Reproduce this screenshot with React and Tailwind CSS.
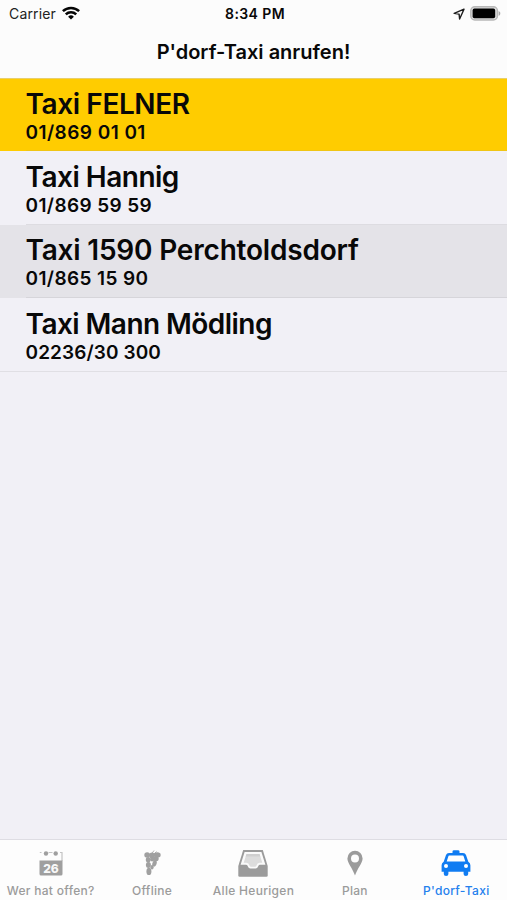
const taxis = [
  { name: 'Taxi FELNER', phone: '01/869 01 01', row: 'h-[72px] bg-[#ffcc00] pt-[9px]', line: 'border-[#f0c514]', nameCls: 'tracking-[-0.4px]', phoneCls: 'tracking-[0.45px]' },
  { name: 'Taxi Hannig', phone: '01/869 59 59', row: 'h-[74px] bg-[#f1f0f6] pt-[10px]', line: 'border-[#dddce1]', nameCls: 'tracking-[-0.5px]', phoneCls: 'tracking-[0.38px]' },
  { name: 'Taxi 1590 Perchtoldsdorf', phone: '01/865 15 90', row: 'h-[73px] bg-[#e4e3e8] pt-[9px]', line: 'border-[#d6d5da]', nameCls: 'tracking-[-0.2px]', phoneCls: 'tracking-[0.38px]' },
  { name: 'Taxi Mann Mödling', phone: '02236/30 300', row: 'h-[73px] bg-[#f1f0f6] pt-[10px]', line: 'border-transparent', nameCls: 'tracking-[-0.55px]', phoneCls: 'tracking-[0.1px]' },
]

function WifiIcon() {
  return (
    <svg className="w-[18px] h-[14px] -mt-[2px]" viewBox="0 0 18 14" fill="none" stroke="#050505" strokeWidth="2.5">
      <path d="M0.9 5.2a11.6 11.6 0 0 1 16.2 0" />
      <path d="M3.8 8.3a7.4 7.4 0 0 1 10.4 0" />
      <path d="M9 13.6 6.1 10.7a4.1 4.1 0 0 1 5.8 0z" fill="#050505" stroke="none" />
    </svg>
  )
}

function LocationIcon() {
  return (
    <svg className="w-3 h-3 -mt-px" viewBox="0 0 12 12" fill="none" stroke="#1c1c1c" strokeWidth="1.4" strokeLinejoin="round">
      <path d="M11 1.2 1.2 5.4l4.9.7.5 4.900z" />
    </svg>
  )
}

function BatteryIcon() {
  return (
    <svg className="w-[31px] h-[15px] -mt-[2px]" viewBox="0 0 31 15">
      <rect x="0.8" y="0.8" width="26.600" height="13.2" rx="4" fill="#dedede" stroke="#b8b8b8" strokeWidth="1.5" />
      <rect x="2.6" y="2.6" width="22.6" height="9.6" rx="1.8" fill="#000" />
      <path d="M28.6 5v4.8c1-.4 1.7-1.3 1.7-2.4S29.6 5.400 28.600 5z" fill="#a8a8a8" />
    </svg>
  )
}

function CalendarIcon() {
  return (
    <svg className="w-6 h-[27px]" viewBox="0 0 24 27">
      <path d="M.8 2.500H2.500M9.500 2.500h4M21 2.500h2V11" fill="none" stroke="#c4c4c4" strokeWidth="1.2" />
      <path d="M.5 10.500h23V24a1.500 1.500 0 0 1-1.500 1.500H2A1.500 1.500 0 0 1 .5 24z" fill="#9f9f9f" />
      <circle cx="7" cy="3.500" r="2.200" fill="#9f9f9f" />
      <circle cx="16.700" cy="3.500" r="2.200" fill="#9f9f9f" />
      <text x="12" y="22.500" textAnchor="middle" fill="#f8f8f8" className="font-['Inter'] text-[12px] font-extrabold">26</text>
    </svg>
  )
}

function GrapesIcon() {
  return (
    <svg className="w-[18px] h-[27px]" viewBox="0 0 18 27" fill="#a0a0a0">
      <path d="M8.500 4 11 .5M11 4l2.500-2.500" stroke="#b5b5b5" strokeWidth="1" />
      <ellipse cx="4.200" cy="5" rx="2.900" ry="2.800" />
      <ellipse cx="9" cy="5.500" rx="2.700" ry="3.100" />
      <ellipse cx="14.200" cy="5" rx="3.500" ry="2.800" />
      <ellipse cx="5.200" cy="9.800" rx="2.400" ry="2.800" />
      <ellipse cx="9.200" cy="9.200" rx="2.100" ry="2.200" />
      <ellipse cx="13" cy="8.800" rx="2.700" ry="2.500" />
      <ellipse cx="5.400" cy="15" rx="2.500" ry="2.900" />
      <ellipse cx="11.500" cy="13.500" rx="2.100" ry="3.200" transform="rotate(20 11.500 13.500)" />
      <ellipse cx="9" cy="17.300" rx="1.600" ry="2.300" />
      <ellipse cx="5.900" cy="21.400" rx="2.500" ry="3.600" />
    </svg>
  )
}

function InboxIcon() {
  return (
    <svg className="w-[30px] h-[27px]" viewBox="0 0 30 27">
      <path d="M5.200 0h19.600L29.700 16v9.500a1.300 1.300 0 0 1-1.300 1.300H1.600A1.300 1.300 0 0 1 .3 25.500V16z" fill="#9b9b9b" />
      <path d="M6.600 2h16.800L27.400 14.800h-5.200q-1.500 0-2 1.400-.8 2.300-2.600 2.300h-5.200q-1.800 0-2.600-2.300-.5-1.400-2-1.400H2.600z" fill="#fafafa" />
      <path d="M8.500 4h13l2.800 8.800h-2.800q-2.300.3-3 2.700-.5 1.300-1.500 1.300h-4q-1 0-1.500-1.300-.7-2.400-3-2.700H5.700z" fill="#dcdcdc" />
      <path d="M8.500 4h13l.9 2.600H7.600z" fill="#cfcfcf" />
    </svg>
  )
}

function PinIcon() {
  return (
    <svg className="w-4 h-[27px]" viewBox="0 0 16 27">
      <path fillRule="evenodd" d="M8 .8a7.600 7.600 0 0 1 7.600 7.600C15.600 13 10.500 18 8 25.500 5.500 18 .4 13 .4 8.400A7.600 7.600 0 0 1 8 .8zm0 3.600a4 4 0 1 0 0 8 4 4 0 0 0 0-8z" fill="#9b9b9b" />
    </svg>
  )
}

function TaxiIcon() {
  return (
    <svg className="w-[30px] h-[27px]" viewBox="0 0 30 27">
      <path d="M11.500 3V1.500Q11.500.3 13 .3h4q1.500 0 1.500 1.200V3H22q2.300 0 3 2l2.300 6.700q2.100 1.200 2.100 3.600v6.500h-2.200V24q0 2-2.300 2t-2.300-2v-2.200H7.400V24q0 2-2.300 2t-2.300-2v-2.200H.6v-6.500q0-2.400 2.100-3.600L5 5q.7-2 3-2z" fill="#107cf2" />
      <path d="M8.300 5.600h13.400q.8 0 1 .8l1.600 5H5.700l1.600-5q.2-.8 1-.8z" fill="#fff" />
      <circle cx="5" cy="16" r="2" fill="#fff" />
      <circle cx="25" cy="16" r="2" fill="#fff" />
    </svg>
  )
}

const tabs = [
  { label: 'Wer hat offen?', icon: <CalendarIcon />, text: 'text-[#9b9b9b]' },
  { label: 'Offline', icon: <GrapesIcon />, text: 'text-[#9b9b9b]' },
  { label: 'Alle Heurigen', icon: <InboxIcon />, text: 'text-[#9b9b9b]' },
  { label: 'Plan', icon: <PinIcon />, text: 'text-[#9b9b9b]' },
  { label: "P'dorf-Taxi", icon: <TaxiIcon />, text: 'text-[#2480ed]' },
]

export default function App() {
  return (
    <div className="h-screen flex flex-col bg-[#f1f0f6] font-['Inter',sans-serif] text-[#080808] overflow-hidden">
      <header className="h-[79px] shrink-0 bg-[#fcfcfc] border-b border-[#e8cf6c]">
        <div className="grid grid-cols-3 h-7 pl-[9px] pr-[6px] items-center">
          <div className="flex items-center gap-[6px]">
            <span className="text-[14px] leading-5 tracking-[0.15px] text-[#222]">Carrier</span>
            <WifiIcon />
          </div>
          <span className="text-center text-[14px] leading-5 font-semibold tracking-[0.4px] whitespace-nowrap">8:34 PM</span>
          <div className="flex items-center justify-end gap-[5px]">
            <LocationIcon />
            <BatteryIcon />
          </div>
        </div>
        <h1 className="text-center text-[20px] leading-[49px] font-semibold">P'dorf-Taxi anrufen!</h1>
      </header>

      <ul className="flex-1">
        {taxis.map((t) => (
          <li key={t.name} className={`flex flex-col pl-[25.5px] ${t.row}`}>
            <span className={`text-[28px] leading-8 font-semibold whitespace-nowrap ${t.nameCls}`}>{t.name}</span>
            <span className={`mt-px text-[19px] leading-6 font-semibold whitespace-nowrap ${t.phoneCls}`}>{t.phone}</span>
            <div className={`mt-auto border-b ${t.line}`} />
          </li>
        ))}
        <li className="border-t border-[#e0dfe4]" />
      </ul>

      <nav className="h-[61px] shrink-0 grid grid-cols-5 bg-[#fdfdfd] border-t border-[#dedde3]">
        {tabs.map((t) => (
          <button key={t.label} type="button" className={`flex flex-col items-center pt-[10px] ${t.text}`}>
            {t.icon}
            <span className="mt-[6px] text-[12px] leading-4 font-medium tracking-[0.3px] whitespace-nowrap">{t.label}</span>
          </button>
        ))}
      </nav>
    </div>
  )
}
